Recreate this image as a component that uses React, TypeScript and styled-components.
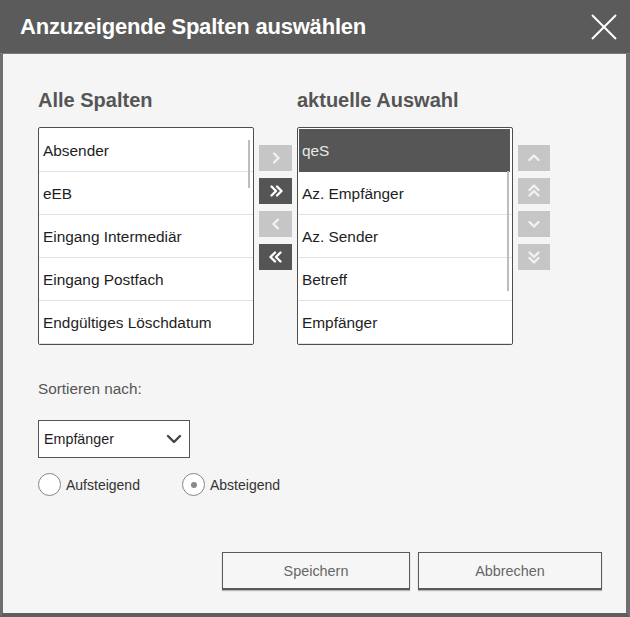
import React from 'react';
import styled, { createGlobalStyle } from 'styled-components';

const GlobalStyle = createGlobalStyle`
  html, body {
    margin: 0;
    padding: 0;
    background: #6a6a6a;
  }
  body {
    font-family: "Liberation Sans", Arial, sans-serif;
  }
`;

const Frame = styled.div`
  width: 630px;
  height: 617px;
  box-sizing: border-box;
  border-left: 3px solid #6e6e6e;
  border-right: 4px solid #6e6e6e;
  border-bottom: 4px solid #5e5e5e;
  background: #f5f5f5;
  display: flex;
  flex-direction: column;
`;

const Header = styled.div`
  height: 53px;
  margin: 0 -4px 0 -3px;
  background: #5b5b5b;
  display: flex;
  align-items: center;
  justify-content: space-between;
  padding: 0 12px 0 20px;
  box-shadow: 0 1px 0 #7a7a7a;
`;

const Title = styled.h1`
  margin: 0;
  font-size: 22px;
  font-weight: bold;
  color: #ffffff;
  letter-spacing: -0.2px;
`;

const Body = styled.div`
  flex: 1;
  padding: 35px 35px 0 35px;
  display: flex;
  flex-direction: column;
`;

const Columns = styled.div`
  display: grid;
  grid-template-columns: 216px 33px 216px 32px;
  column-gap: 5px;
  align-items: start;
`;

const Heading = styled.h2`
  margin: 0 0 15px;
  font-size: 20px;
  line-height: 24px;
  font-weight: bold;
  color: #555555;
`;

const Column = styled.div`
  display: flex;
  flex-direction: column;
`;

const ListBox = styled.div`
  position: relative;
  height: 218px;
  box-sizing: border-box;
  border: 1px solid #4e4e4e;
  border-radius: 2px;
  background: #ffffff;
  overflow: hidden;
  padding-top: 1px;
`;

const Item = styled.div<{ $selected?: boolean }>`
  height: 43px;
  box-sizing: border-box;
  margin: 0 ${p => (p.$selected ? '2px' : '0')} 0 ${p => (p.$selected ? '1px' : '0')};
  padding-left: ${p => (p.$selected ? '3px' : '4px')};
  padding-top: 2px;
  display: flex;
  align-items: center;
  font-size: 15.4px;
  color: ${p => (p.$selected ? '#e8e8e8' : '#1e1e1e')};
  background: ${p => (p.$selected ? '#565656' : 'transparent')};
  border-bottom: 1px solid ${p => (p.$selected ? '#565656' : '#e2e2e2')};
`;

const ScrollThumb = styled.div<{ $top: number; $height: number }>`
  position: absolute;
  right: 3px;
  top: ${p => p.$top}px;
  width: 2px;
  height: ${p => p.$height}px;
  background: #bdbdbd;
`;

const ButtonStack = styled.div`
  margin-top: 57px;
  display: flex;
  flex-direction: column;
  gap: 7px;
`;

const MoveButton = styled.button<{ $dark?: boolean }>`
  width: 100%;
  height: 26px;
  padding: 0;
  border: none;
  background: ${p => (p.$dark ? '#555555' : '#c6c6c6')};
  display: flex;
  align-items: center;
  justify-content: center;
  cursor: pointer;
`;

const SortLabel = styled.div`
  margin-top: 35px;
  font-size: 15.3px;
  color: #555555;
`;

const Select = styled.div`
  margin-top: 22px;
  width: 152px;
  height: 38px;
  box-sizing: border-box;
  border: 1px solid #555555;
  background: #ffffff;
  display: flex;
  align-items: center;
  justify-content: space-between;
  padding: 0 6px 0 5px;
  font-size: 14.3px;
  color: #1e1e1e;
`;

const RadioRow = styled.div`
  margin-top: 15px;
  display: flex;
  align-items: center;
`;

const RadioOption = styled.label<{ $width: number }>`
  width: ${p => p.$width}px;
  display: flex;
  align-items: center;
  gap: 5px;
  font-size: 14px;
  color: #333333;
`;

const RadioCircle = styled.span<{ $checked?: boolean }>`
  width: 21px;
  height: 21px;
  border-radius: 50%;
  border: 1px solid #858585;
  background: #ffffff;
  display: flex;
  align-items: center;
  justify-content: center;
  &::after {
    content: '';
    display: ${p => (p.$checked ? 'block' : 'none')};
    width: 6px;
    height: 6px;
    border-radius: 50%;
    background: #8a8a8a;
  }
`;

const Footer = styled.div`
  margin-top: auto;
  margin-bottom: 23px;
  display: flex;
  justify-content: flex-end;
  gap: 8px;
  margin-right: -11px;
`;

const FooterButton = styled.button<{ $width: number }>`
  width: ${p => p.$width}px;
  height: 38px;
  box-sizing: border-box;
  border: 1px solid #5a5a5a;
  border-bottom-width: 2px;
  background: #f6f6f6;
  font-family: "Liberation Sans", Arial, sans-serif;
  font-size: 14.4px;
  color: #666666;
  box-shadow: 0 1px 1px rgba(0, 0, 0, 0.25);
`;

const Chevron = ({ dir, double, color }: { dir: 'up' | 'down' | 'left' | 'right'; double?: boolean; color: string }) => {
  const rot = { right: 0, down: 90, left: 180, up: 270 }[dir];
  return (
    <svg width="16" height="16" viewBox="0 0 16 16" style={{ transform: `rotate(${rot}deg)` }}>
      {double ? (
        <g fill="none" stroke={color} strokeWidth="2.4" strokeLinecap="round" strokeLinejoin="round">
          <path d="M3.5 3.5 L8 8 L3.5 12.5" />
          <path d="M9 3.5 L13.5 8 L9 12.5" />
        </g>
      ) : (
        <path d="M6 3.5 L10.5 8 L6 12.5" fill="none" stroke={color} strokeWidth="2.4" strokeLinecap="round" strokeLinejoin="round" />
      )}
    </svg>
  );
};

const CloseIcon = () => (
  <svg width="28" height="28" viewBox="0 0 28 28">
    <path d="M2 2 L26 26 M26 2 L2 26" stroke="#ffffff" strokeWidth="2" fill="none" />
  </svg>
);

const allColumns = ['Absender', 'eEB', 'Eingang Intermediär', 'Eingang Postfach', 'Endgültiges Löschdatum'];
const selected = ['qeS', 'Az. Empfänger', 'Az. Sender', 'Betreff', 'Empfänger'];

export default function App() {
  return (
    <>
      <GlobalStyle />
      <Frame>
        <Header>
          <Title>Anzuzeigende Spalten auswählen</Title>
          <CloseIcon />
        </Header>
        <Body>
          <Columns>
            <Column>
              <Heading>Alle Spalten</Heading>
              <ListBox>
                {allColumns.map(c => (
                  <Item key={c}>{c}</Item>
                ))}
                <ScrollThumb $top={12} $height={48} />
              </ListBox>
            </Column>
            <ButtonStack>
              <MoveButton><Chevron dir="right" color="#f2f2f2" /></MoveButton>
              <MoveButton $dark><Chevron dir="right" double color="#ffffff" /></MoveButton>
              <MoveButton><Chevron dir="left" color="#f2f2f2" /></MoveButton>
              <MoveButton $dark><Chevron dir="left" double color="#ffffff" /></MoveButton>
            </ButtonStack>
            <Column>
              <Heading>aktuelle Auswahl</Heading>
              <ListBox>
                {selected.map((c, i) => (
                  <Item key={c} $selected={i === 0}>{c}</Item>
                ))}
                <ScrollThumb $top={43} $height={120} />
              </ListBox>
            </Column>
            <ButtonStack>
              <MoveButton><Chevron dir="up" color="#f2f2f2" /></MoveButton>
              <MoveButton><Chevron dir="up" double color="#f2f2f2" /></MoveButton>
              <MoveButton><Chevron dir="down" color="#f2f2f2" /></MoveButton>
              <MoveButton><Chevron dir="down" double color="#f2f2f2" /></MoveButton>
            </ButtonStack>
          </Columns>
          <SortLabel>Sortieren nach:</SortLabel>
          <Select>
            <span>Empfänger</span>
            <svg width="18" height="12" viewBox="0 0 18 12">
              <path d="M3 3 L9 9 L15 3" fill="none" stroke="#444444" strokeWidth="2.4" strokeLinecap="round" strokeLinejoin="round" />
            </svg>
          </Select>
          <RadioRow>
            <RadioOption $width={144}>
              <RadioCircle />
              Aufsteigend
            </RadioOption>
            <RadioOption $width={120}>
              <RadioCircle $checked />
              Absteigend
            </RadioOption>
          </RadioRow>
          <Footer>
            <FooterButton $width={188}>Speichern</FooterButton>
            <FooterButton $width={184}>Abbrechen</FooterButton>
          </Footer>
        </Body>
      </Frame>
    </>
  );
}
